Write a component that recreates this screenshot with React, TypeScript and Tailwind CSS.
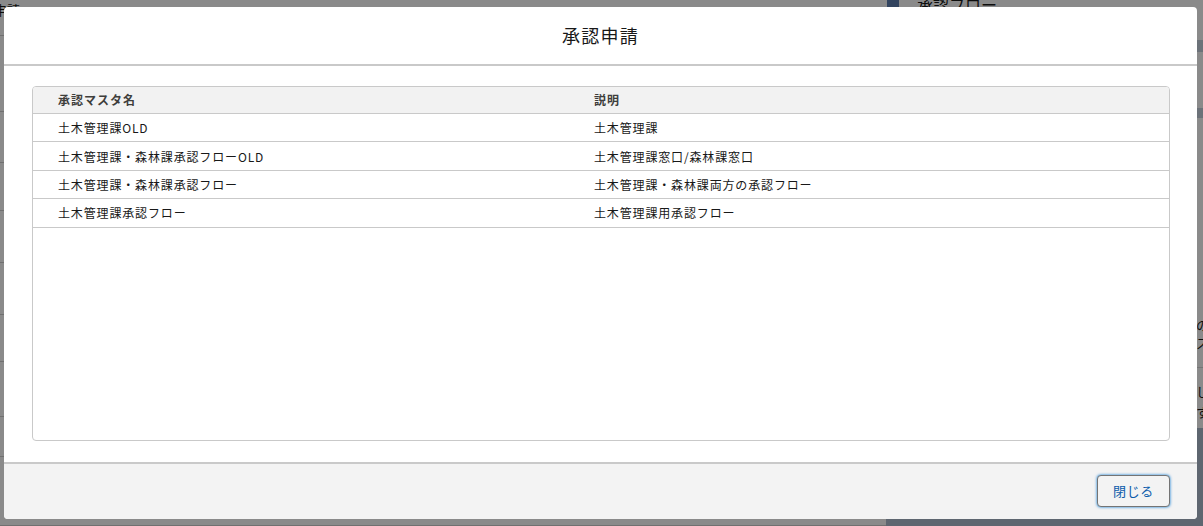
import React from 'react';

const rows = [
  { name: '土木管理課OLD', desc: '土木管理課' },
  { name: '土木管理課・森林課承認フローOLD', desc: '土木管理課窓口/森林課窓口' },
  { name: '土木管理課・森林課承認フロー', desc: '土木管理課・森林課両方の承認フロー' },
  { name: '土木管理課承認フロー', desc: '土木管理課用承認フロー' },
];

// background page rows (heights read off the dimmed page edge)
const bgRows = [36, 76, 51, 48, 52, 52, 47, 55, 40, 69];

export default function App() {
  return (
    <div
      className="relative h-[526px] w-[1203px] overflow-hidden bg-white"
      style={{ fontFamily: '"Noto Sans CJK JP", "Noto Sans", sans-serif' }}
    >
      {/* underlying page */}
      <div className="flex h-full">
        <div className="flex flex-1 flex-col">
          {bgRows.map((h, i) => (
            <div key={i} className="border-b border-[#cfcfcf] px-1 text-[13px] text-[#181818]" style={{ height: h }}>
              {i === 0 ? <span className="-ml-[10px]">申請</span> : null}
            </div>
          ))}
        </div>
        <div className="flex w-[317px] flex-col bg-white">
          <div className="flex h-[40px] items-start gap-[18px] bg-white pl-[1px]">
            <div className="h-[16px] w-[12px] bg-[#5d7fb0]" />
            <span className="-mt-[8px] text-[16px] text-[#181818]">承認フロー</span>
          </div>
          <div className="h-[12px] bg-[#c8d3df]" />
          <div className="h-[56px]" />
          <div className="h-[10px] bg-[#c8d3df]" />
          <div className="h-[198px]" />
          <div className="h-[40px] pl-[310px] text-[13px] leading-[18px] text-[#181818]">
            のス
          </div>
          <div className="h-[12px] border-b border-[#d8d8d8]" />
          <div className="h-[60px] pt-[14px] pl-[310px] text-[13px] leading-[20px] text-[#181818]">
            しす
          </div>
          <div className="flex-1 bg-[#aebdcf]" />
        </div>
      </div>

      {/* backdrop */}
      <div className="absolute inset-0 bg-black/[0.46]" />

      {/* modal */}
      <div className="absolute left-[4px] top-[7px] flex h-[512px] w-[1193px] flex-col overflow-hidden rounded-[4px] bg-white">
        <div className="flex h-[59px] shrink-0 items-center justify-center border-b-2 border-[#c9c9c9]">
          <h2 className="text-[18px] font-normal tracking-[1.2px] text-[#181818]">承認申請</h2>
        </div>

        <div className="flex-1 px-[28px] pb-[21px] pt-[20px]">
          <div className="h-[355px] w-[1138px] overflow-hidden rounded-[4px] border border-[#c9c9c9]">
            <div className="grid h-[27px] grid-cols-[536px_1fr] items-center border-b border-[#c9c9c9] bg-[#f2f2f2] text-[12px] font-bold tracking-[1px] text-[#3e3e3c]">
              <div className="pl-[25px]">承認マスタ名</div>
              <div className="pl-[25px]">説明</div>
            </div>
            {rows.map((r) => (
              <div
                key={r.name}
                className="grid h-[28.4px] grid-cols-[536px_1fr] items-center border-b border-[#c9c9c9] pt-[1px] text-[12px] tracking-[0.85px] text-[#181818]"
              >
                <div className="pl-[25px]">{r.name}</div>
                <div className="pl-[25px]">{r.desc}</div>
              </div>
            ))}
          </div>
        </div>

        <div className="flex h-[57px] shrink-0 items-center justify-end border-t-2 border-[#c9c9c9] bg-[#f3f3f3] px-[27px] pb-[2px]">
          <button className="h-[32px] w-[73px] rounded-[4px] border border-[#747474] bg-[#f3f3f3] text-[13px] tracking-[0.6px] text-[#0b5cab] shadow-[0_0_3px_#0176d3]">
            閉じる
          </button>
        </div>
      </div>
    </div>
  );
}
